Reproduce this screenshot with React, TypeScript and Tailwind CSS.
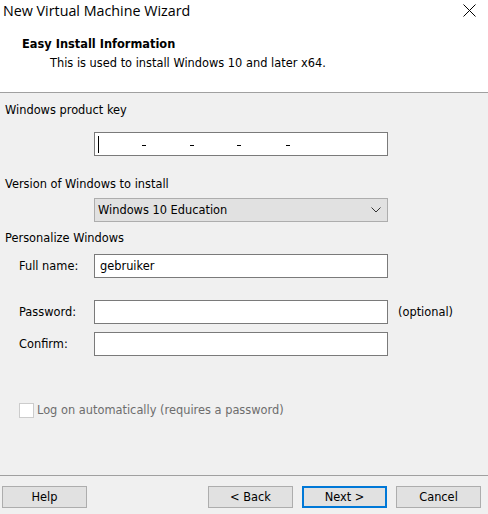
import type React from "react";

const ui = "font-['DejaVu_Sans',sans-serif] text-[11.4px] leading-[16px] text-black";

/* ── Small building blocks ─────────────────────────────────────────── */
const TextBox = ({ value, className = "" }: { value?: string; className?: string }) => (
  <div
    className={`h-[24px] w-[294px] border border-[#7a7a7a] bg-white flex items-center px-[5px] ${className}`}
  >
    {value}
  </div>
);

const Button = ({ label, primary = false }: { label: string; primary?: boolean }) => (
  <button
    className={`h-[22px] w-[85px] bg-[#e1e1e1] flex items-center justify-center ${
      primary ? "border-2 border-[#0078d7]" : "border border-[#adadad]"
    }`}
  >
    {label}
  </button>
);

const FieldRow = ({ label, children }: { label: string; children: React.ReactNode }) => (
  <div className="flex items-center">
    <span className="w-[89px] pl-[14px]">{label}</span>
    {children}
  </div>
);

export default function App() {
  return (
    <div className={`w-[488px] h-[514px] bg-[#f0f0f0] flex flex-col ${ui}`}>
      {/* ═════════ TITLE + PAGE HEADER ═════════ */}
      <header className="h-[93px] bg-white border-b border-[#a0a0a0] flex flex-col shrink-0">
        <div className="h-[32px] flex items-start justify-between pl-[3px] pr-[12px] pt-[1px]">
          <span className="font-['Open_Sans',sans-serif] text-[14.3px] leading-[19px]">
            New Virtual Machine Wizard
          </span>
          <svg width="13" height="13" viewBox="0 0 13 13" className="mt-[3px]">
            <path d="M0.5 0.5 L12.5 12.5 M12.5 0.5 L0.5 12.5" stroke="#000" strokeWidth="1" />
          </svg>
        </div>
        <div className="pl-[22px] pt-[4px] font-bold">Easy Install Information</div>
        <div className="pl-[50px] pt-[3px]">This is used to install Windows 10 and later x64.</div>
      </header>

      {/* ═════════ FORM ═════════ */}
      <main className="flex-1 flex flex-col px-[5px] pt-[9px]">
        <div>Windows product key</div>

        <div className="pl-[89px] mt-[14px]">
          <div className="relative h-[24px] w-[294px] border border-[#7a7a7a] bg-white">
            {/* caret */}
            <span className="absolute left-[3px] top-[3px] h-[17px] w-px bg-black" />
            {[47, 95, 142, 191].map((x) => (
              <span key={x} className="absolute top-[12px] h-px w-[4px] bg-black" style={{ left: x }} />
            ))}
          </div>
        </div>

        <div className="mt-[20px]">Version of Windows to install</div>

        <div className="pl-[89px] mt-[6px]">
          <div className="h-[24px] w-[294px] border border-[#adadad] bg-[#e1e1e1] flex items-center justify-between pl-[3px] pr-[6px]">
            <span>Windows 10 Education</span>
            <svg width="10" height="6" viewBox="0 0 10 6">
              <path d="M0.5 0.5 L5 5 L9.5 0.5" stroke="#333" fill="none" strokeWidth="1" />
            </svg>
          </div>
        </div>

        <div className="mt-[8px]">Personalize Windows</div>

        <div className="mt-[8px]">
          <FieldRow label="Full name:">
            <TextBox value="gebruiker" />
          </FieldRow>
        </div>

        <div className="mt-[22px] flex flex-col gap-[8px]">
          <FieldRow label="Password:">
            <TextBox />
            <span className="ml-[10px]">(optional)</span>
          </FieldRow>
          <FieldRow label="Confirm:">
            <TextBox />
          </FieldRow>
        </div>

        <label className="mt-[46px] ml-[14px] flex items-center gap-[3px] text-[#6d6d6d]">
          <span className="h-[15px] w-[15px] border border-[#cccccc] bg-white" />
          Log on automatically (requires a password)
        </label>
      </main>

      {/* ═════════ BUTTON STRIP ═════════ */}
      <footer className="h-[39px] border-t border-[#a0a0a0] flex items-start pt-[10px] pl-[2px] shrink-0">
        <Button label="Help" />
        <div className="ml-auto flex gap-[9px] pr-[7px]">
          <Button label="< Back" />
          <Button label="Next >" primary />
          <Button label="Cancel" />
        </div>
      </footer>
    </div>
  );
}
